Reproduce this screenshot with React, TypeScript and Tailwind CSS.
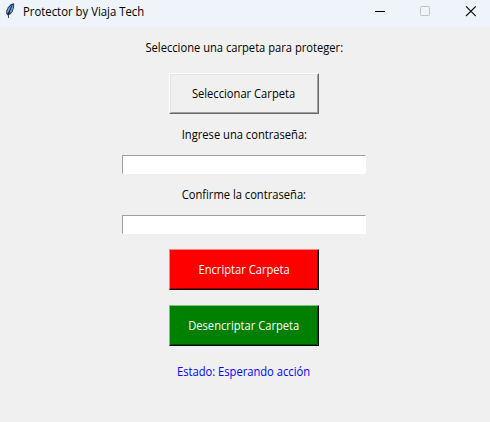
import type { ReactNode } from "react";

function Label({ children, className = "" }: { children: ReactNode; className?: string }) {
  return (
    <p className={`flex h-[21px] items-center justify-center whitespace-nowrap ${className}`}>
      <span className="inline-block scale-x-[0.93]">{children}</span>
    </p>
  );
}

function RaisedButton({ children, outer, inner }: { children: ReactNode; outer: string; inner: string }) {
  return (
    <button type="button" className={`flex h-[41px] w-[150px] border ${outer}`}>
      <span className={`flex h-full w-full items-center justify-center whitespace-nowrap border ${inner}`}>
        <span className="inline-block scale-x-[0.93]">{children}</span>
      </span>
    </button>
  );
}

function Entry() {
  return (
    <input
      type="password"
      className="block h-[19px] w-[244px] border border-t-[#a0a0a0] border-r-white border-b-white border-l-[#a0a0a0] bg-white outline-none"
    />
  );
}

function TitleBar() {
  return (
    <header className="flex h-[27px] items-start bg-gradient-to-r from-[#eef4f9] to-[#eff3fb]">
      <svg className="mt-[3px] ml-[4px] h-4 w-3" viewBox="0 0 12 16" fill="none">
        <path d="M9.5 .3 10.2 .8 10 4.5 8.8 8.3 6.5 11.3 3.4 12.3 2.2 10.5 2.3 7.5 4 4.2 6.6 1.3Z" fill="#26384d" />
        <path d="M9.2 1.2 9.2 4.8 7.9 8.2 5.4 10.6 6.4 5.6Z" fill="#5b98e4" />
        <path d="M7.8 1.9 4.8 4.7 3.1 8.3 3.2 10.6 5.4 7.4Z" fill="#6ea6ea" />
        <path d="M7.6 3.4 4.8 9.8 4.4 15" stroke="#151515" strokeWidth=".8" />
      </svg>
      <h1 className="mt-[3px] ml-[7px] h-[18px] flex-1 origin-left scale-x-[0.945] leading-[18px] whitespace-nowrap">
        Protector by Viaja Tech
      </h1>
      <div className="mt-[6px] mr-[14px] flex gap-[35px]">
        <svg className="h-[11px] w-[10px]" viewBox="0 0 10 11">
          <path d="M0 5.5H10" stroke="#000" />
        </svg>
        <svg className="h-[11px] w-[10px]" viewBox="0 0 10 11" fill="none">
          <rect x=".5" y=".5" width="9" height="9" rx=".8" stroke="#c0c3c8" />
        </svg>
        <svg className="h-[11px] w-[11px]" viewBox="0 0 11 11">
          <path d="M1 .3 10.8 10M10.8 .3 1 10" stroke="#111" strokeWidth="1.1" />
        </svg>
      </div>
    </header>
  );
}

export default function App() {
  return (
    <div className="h-[422px] w-[490px] overflow-hidden bg-[#f0f0f0] font-['Open_Sans','Noto_Sans',sans-serif] text-[12px] text-black">
      <TitleBar />
      <main className="flex w-[488px] flex-col items-center pt-[10px]">
        <Label>Seleccione una carpeta para proteger:</Label>
        <div className="pt-[15px] pb-[10px]">
          <RaisedButton
            outer="border-t-white border-l-white border-r-[#696969] border-b-[#696969]"
            inner="border-t-[#e3e3e3] border-l-[#e3e3e3] border-r-[#a0a0a0] border-b-[#a0a0a0]"
          >
            Seleccionar Carpeta
          </RaisedButton>
        </div>
        <Label>Ingrese una contraseña:</Label>
        <div className="pt-[10px] pb-[10px]">
          <Entry />
        </div>
        <Label>Confirme la contraseña:</Label>
        <div className="pt-[10px] pb-[15px]">
          <Entry />
        </div>
        <RaisedButton
          outer="border-t-[#ff7f7f] border-l-[#ff7f7f] border-r-black border-b-black text-white"
          inner="border-t-[#ff0000] border-l-[#ff0000] border-r-[#990000] border-b-[#990000] bg-[#ff0000]"
        >
          Encriptar Carpeta
        </RaisedButton>
        <div className="pt-[15px] pb-[15px]">
          <RaisedButton
            outer="border-t-[#7fbf7f] border-l-[#7fbf7f] border-r-black border-b-black text-white"
            inner="border-t-[#008000] border-l-[#008000] border-r-[#004d00] border-b-[#004d00] bg-[#008000]"
          >
            Desencriptar Carpeta
          </RaisedButton>
        </div>
        <Label className="text-[#0000ff]">Estado: Esperando acción</Label>
      </main>
    </div>
  );
}
